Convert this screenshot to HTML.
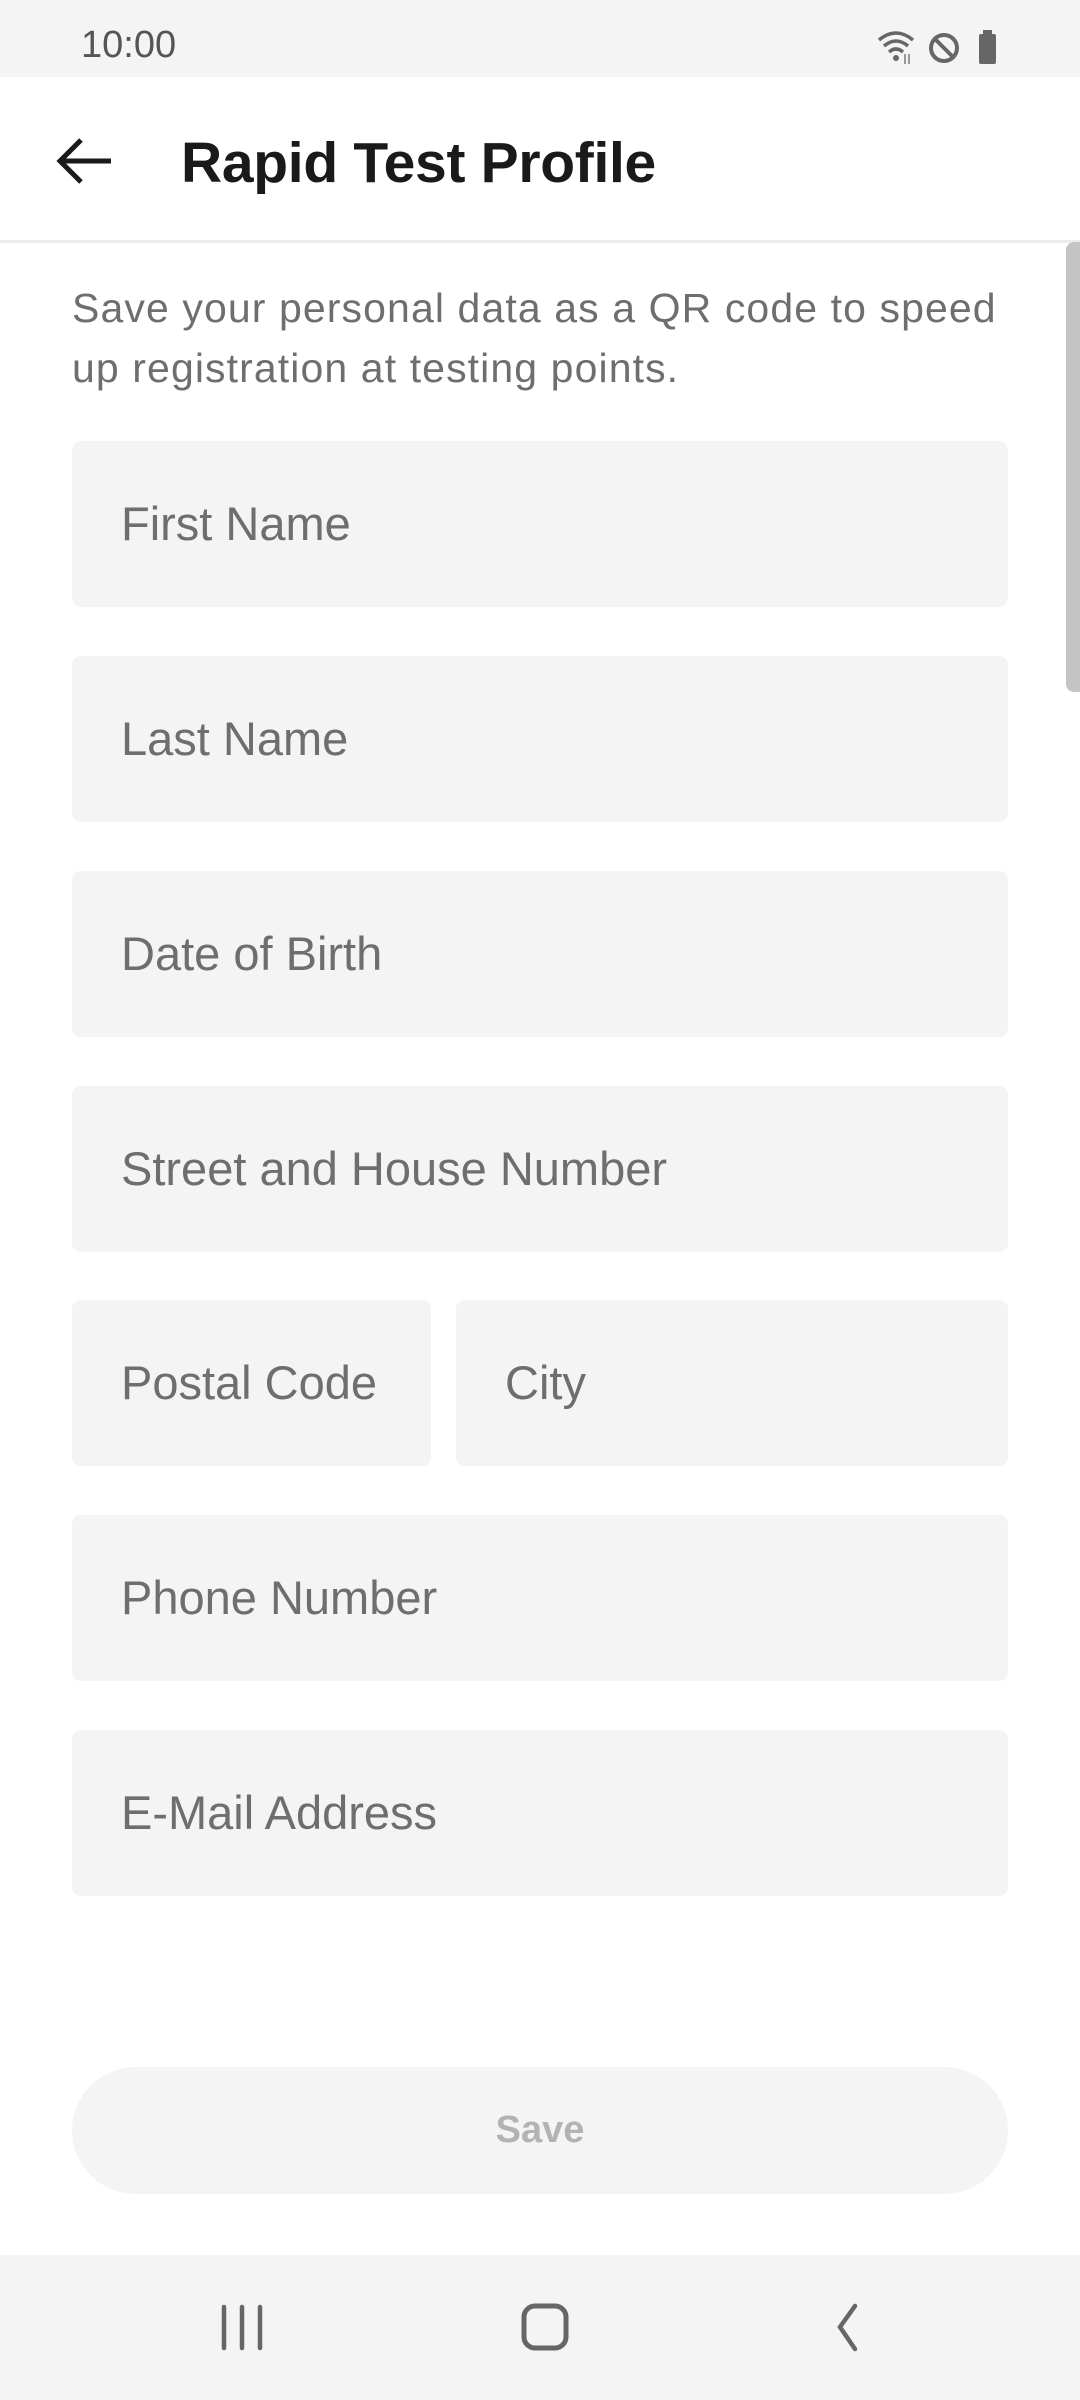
<!DOCTYPE html>
<html><head><meta charset="utf-8"><style>
*{margin:0;padding:0;box-sizing:border-box}
body{width:1080px;height:2400px;background:#fff;font-family:"Liberation Sans",sans-serif;position:relative;overflow:hidden}
.sb{position:absolute;left:0;top:0;width:1080px;height:77px;background:#f4f4f4}
.time{position:absolute;left:81px;top:24px;font-size:38px;color:#555}
.bar{position:absolute;left:0;top:77px;width:1080px;height:166px;background:#fff;border-bottom:3px solid #ececec}
.title{position:absolute;left:181px;top:53px;font-size:57px;font-weight:bold;color:#1a1a1a;letter-spacing:-0.3px}
.desc{position:absolute;left:72px;top:278px;width:1000px;font-size:41px;line-height:60px;color:#6e6e6e;letter-spacing:1.1px}
.f{position:absolute;left:72px;width:936px;height:166px;background:#f4f4f4;border-radius:9px;font-size:47px;color:#6e6e6e;padding-left:49px;line-height:166px}
.scroll{position:absolute;left:1066px;top:242px;width:14px;height:450px;background:#c4c4c4;border-radius:8px 0 0 8px}
.save{position:absolute;left:72px;top:2067px;width:936px;height:127px;background:#f4f4f4;border-radius:64px;text-align:center;line-height:127px;font-size:38px;font-weight:bold;color:#b3b3b3}
.nav{position:absolute;left:0;top:2255px;width:1080px;height:145px;background:#f4f4f4}
</style></head><body>
<div class="sb"><div class="time">10:00</div>
<svg style="position:absolute;left:875px;top:28px" width="140" height="38" viewBox="0 0 140 38">
<path d="M4 12 Q21 -2 38 12" stroke="#666" stroke-width="3.5" fill="none"/>
<path d="M9 18 Q21 8 33 18" stroke="#666" stroke-width="3.5" fill="none"/>
<path d="M14 24 Q21 18 28 24" stroke="#666" stroke-width="3.5" fill="none"/>
<circle cx="21" cy="30" r="3" fill="#666"/>
<path d="M30 26v10M34 36V26" stroke="#999" stroke-width="2"/>
<circle cx="69" cy="20" r="13" stroke="#666" stroke-width="4" fill="none"/>
<path d="M60 11L78 29" stroke="#666" stroke-width="4"/>
<rect x="104" y="6" width="17" height="30" rx="2" fill="#666"/><rect x="108" y="2" width="9" height="5" fill="#666"/>
</svg></div>
<div class="bar">
<svg style="position:absolute;left:55px;top:58px" width="60" height="52" viewBox="0 0 60 52"><path d="M56 26H6M26 5L5 26L26 47" stroke="#1a1a1a" stroke-width="5" fill="none"/></svg>
<div class="title">Rapid Test Profile</div></div>
<div class="scroll"></div>
<div class="desc">Save your personal data as a QR code to speed<br>up registration at testing points.</div>
<div class="f" style="top:441px">First Name</div>
<div class="f" style="top:656px">Last Name</div>
<div class="f" style="top:871px">Date of Birth</div>
<div class="f" style="top:1086px">Street and House Number</div>
<div class="f" style="top:1300px;width:359px">Postal Code</div>
<div class="f" style="top:1300px;left:456px;width:552px">City</div>
<div class="f" style="top:1515px">Phone Number</div>
<div class="f" style="top:1730px">E-Mail Address</div>
<div class="save">Save</div>
<div class="nav">
<svg style="position:absolute;left:0;top:0" width="1080" height="145" viewBox="0 0 1080 145">
<path d="M224 52v41M242 52v41M260 52v41" stroke="#666" stroke-width="4.5" stroke-linecap="round"/>
<rect x="524" y="51" width="42" height="42" rx="11" stroke="#666" stroke-width="5" fill="none"/>
<path d="M855 51L840 72L855 94" stroke="#666" stroke-width="4.5" fill="none" stroke-linecap="round"/>
</svg></div>
</body></html>
